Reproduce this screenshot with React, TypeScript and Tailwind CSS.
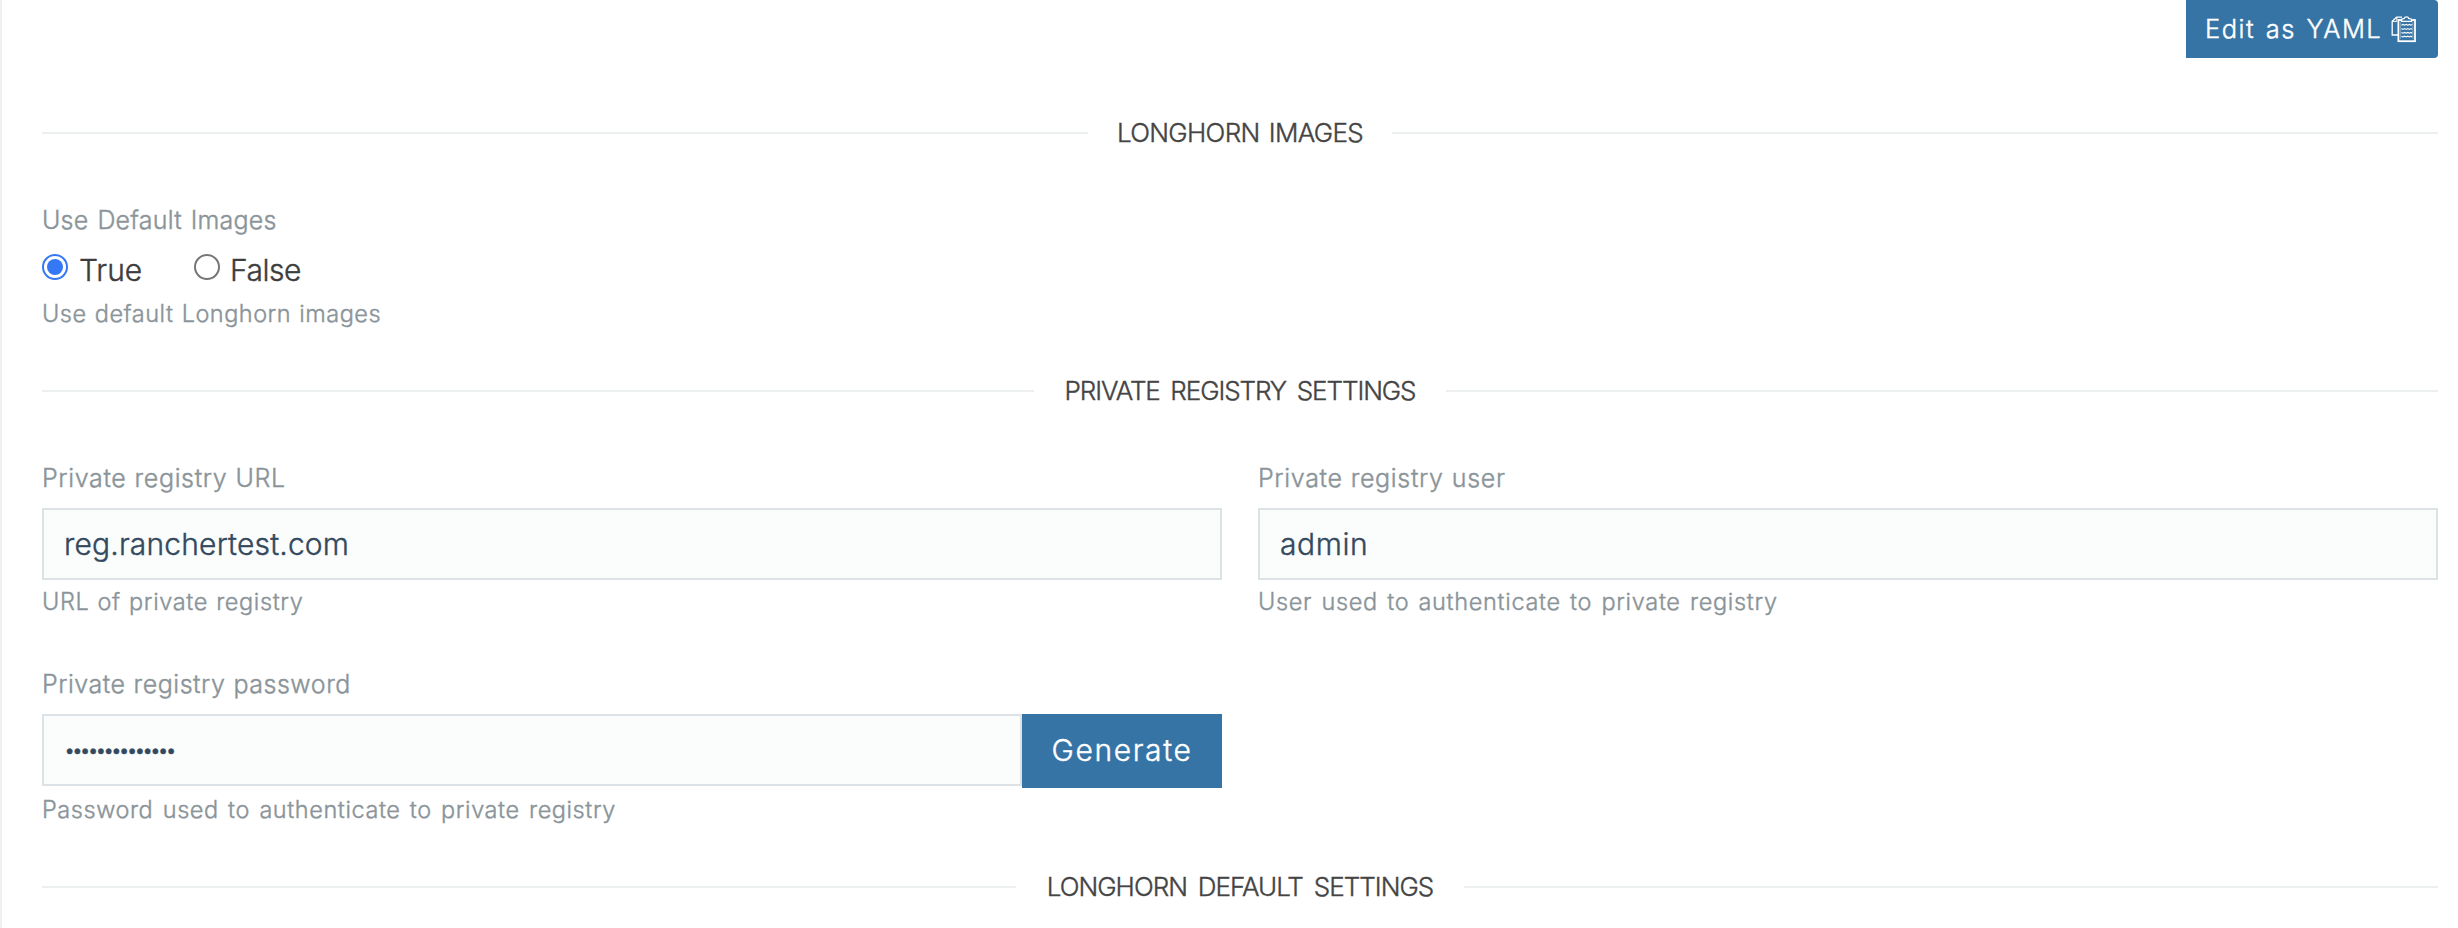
import type { ReactNode } from "react";

function PasteIcon() {
  return (
    <svg width="26" height="28" viewBox="0 0 26 28" fill="none" stroke="#fff" className="mb-px shrink-0">
      <path d="M7 20H1.2V6.2L5.6 2.2H11" strokeWidth="1.3" />
      <path d="M5.8 2.2V6.4H1.2" strokeWidth="1" />
      <rect x="7.4" y="5" width="16.6" height="21.2" strokeWidth="1.8" />
      <path d="M9.6 7.2V24M21.9 7.2V24" strokeWidth="0.7" opacity="0.5" />
      <path d="M10.6 6.4V4.2L13.2 3.4C13.6 1.4 17.4 1.4 17.8 3.4L20.6 4.2V6.4Z" fill="#3674a5" strokeWidth="1.3" />
      <path
        d="M10.4 10.2L12 9.4L13.6 10.2L15.2 9.4L16.8 10.2L18.4 9.4L20 10.2L21.2 9.4M10.4 13.6L12 14.4L13.6 13.6L15.2 14.4L16.8 13.6L18.4 14.4L20 13.6L21.2 14.4M10.4 17.4L12 18.2L13.6 17.4L15.2 18.2L16.8 17.4L18.4 18.2L20 17.4L21.2 18.2M10.4 21.2L12 22L13.6 21.2L15.2 22L16.8 21.2L18.4 22L20 21.2L21.2 22"
        strokeWidth="1.1"
      />
    </svg>
  );
}

function SectionTitle({ width, className, children }: { width: string; className: string; children: ReactNode }) {
  return (
    <div className={`flex h-10 items-center text-[26px] leading-10 text-[#444] ${className}`}>
      <div className="h-0.5 flex-1 bg-[#ecf0f1]" />
      <h2 className={`whitespace-nowrap text-center font-light ${width}`}>{children}</h2>
      <div className="h-0.5 flex-1 bg-[#ecf0f1]" />
    </div>
  );
}

function Label({ className = "", children }: { className?: string; children: ReactNode }) {
  return <div className={`h-[30px] whitespace-nowrap text-[25px] leading-[32px] text-[#8a9499] ${className}`}>{children}</div>;
}

function Hint({ className = "", children }: { className?: string; children: ReactNode }) {
  return <div className={`h-[30px] whitespace-nowrap text-[23.5px] leading-[30px] text-[#8a9499] ${className}`}>{children}</div>;
}

function Radio({ checked }: { checked?: boolean }) {
  return (
    <span
      className={`-mt-1 flex size-[26px] items-center justify-center rounded-full border-2 ${checked ? "border-[#3478f6]" : "border-[#767676]"}`}
    >
      {checked && <span className="size-4 rounded-full bg-[#3478f6]" />}
    </span>
  );
}

const box =
  "block h-[72px] w-full border-2 border-[#dde2e6] bg-[#fbfdfc] pl-5 font-light text-[#34495e] outline-none";

export default function App() {
  return (
    <div className="h-[928px] overflow-hidden border-l-2 border-[#ecf0f1] bg-white pl-10 pr-5 font-['Inter','Liberation_Sans',sans-serif] font-light [-webkit-text-stroke:0.4px_currentColor]">
      <div className="flex justify-end">
        <button className="flex h-[58px] w-[252px] items-center rounded-r-[4px] bg-[#3674a5] pl-[19px] text-[25.5px] text-white">
          <span className="w-[186px] whitespace-nowrap text-left tracking-[1.5px] [word-spacing:2px]">Edit as YAML</span>
          <PasteIcon />
        </button>
      </div>

      <SectionTitle width="w-[304px]" className="mt-[55px] tracking-[-0.67px] [word-spacing:2.7px]">LONGHORN IMAGES</SectionTitle>

      <Label className="mt-[51px] tracking-[0.22px] [word-spacing:1.7px]">Use Default Images</Label>
      <div className="mt-[15px] flex h-10 items-center text-[30px] leading-10 text-[#3d3d3d]">
        <label className="flex w-[152px] items-center gap-[11px]">
          <Radio checked />
          <span className="pt-px">True</span>
        </label>
        <label className="flex items-center gap-[10px]">
          <Radio />
          <span className="pt-px tracking-[-0.5px]">False</span>
        </label>
      </div>
      <Hint className="mt-2.5 tracking-[0.5px] [word-spacing:1.1px]">Use default Longhorn images</Hint>

      <SectionTitle width="w-[412px]" className="mt-[42px] tracking-[-1.06px] [word-spacing:4.3px]">PRIVATE REGISTRY SETTINGS</SectionTitle>

      <div className="mt-[51px] grid grid-cols-2 gap-x-9">
        <div>
          <Label className="tracking-[0.65px] [word-spacing:0.4px]">Private registry URL</Label>
          <input className={`mt-4 text-[30px] tracking-[0.17px] ${box}`} defaultValue="reg.ranchertest.com" />
          <Hint className="mt-[7px] tracking-[0.62px] [word-spacing:1px]">URL of private registry</Hint>
        </div>
        <div>
          <Label className="tracking-[0.67px] [word-spacing:0.4px]">Private registry user</Label>
          <input className={`mt-4 text-[30px] tracking-[0.6px] ${box}`} defaultValue="admin" />
          <Hint className="mt-[7px] tracking-[0.67px] [word-spacing:2px]">User used to authenticate to private registry</Hint>
        </div>
        <div className="mt-[51px]">
          <Label className="tracking-[0.53px] [word-spacing:0.4px]">Private registry password</Label>
          <div className="mt-4 flex h-[74px] items-start">
            <input type="password" className={`text-[20px] tracking-[-3.45px] ${box}`} defaultValue="longhorn-admin" />
            <button className="h-[74px] w-[200px] shrink-0 bg-[#3674a5] pb-0.5 text-[30px] tracking-[1.6px] text-white">Generate</button>
          </div>
          <Hint className="mt-[7px] tracking-[0.57px] [word-spacing:2.2px]">Password used to authenticate to private registry</Hint>
        </div>
      </div>

      <SectionTitle width="w-[448px]" className="mt-[42px] tracking-[-0.96px] [word-spacing:4.4px]">LONGHORN DEFAULT SETTINGS</SectionTitle>
    </div>
  );
}
